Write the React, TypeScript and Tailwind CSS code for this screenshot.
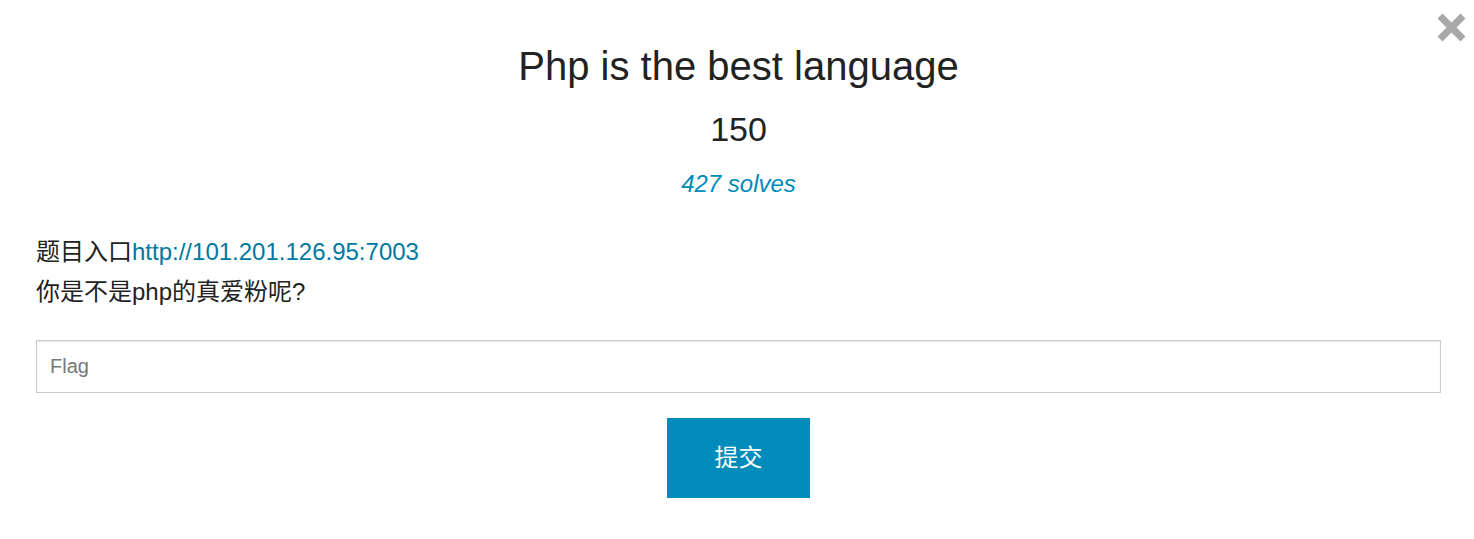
export default function App() {
  return (
    <div className="relative w-full min-h-[539px] bg-white" style={{ fontFamily: '"Liberation Sans", Arial, "Noto Sans CJK SC", sans-serif' }}>
      <button className="absolute right-[8px] top-[13px] w-[29px] h-[29px]" aria-label="close">
        <svg width="29" height="29" viewBox="0 0 29 29">
          <line x1="3" y1="3" x2="26" y2="26" stroke="#a8a8a8" strokeWidth="7" />
          <line x1="26" y1="3" x2="3" y2="26" stroke="#a8a8a8" strokeWidth="7" />
        </svg>
      </button>
      <div className="px-[36px] pr-[33px] pt-[42px]">
        <h1 className="text-center text-[40px] leading-[48px] text-[#222222] font-normal">Php is the best language</h1>
        <div className="mt-[19px] text-center text-[34px] leading-[40px] text-[#222222]">150</div>
        <div className="mt-[19px] text-center text-[24px] leading-[32px] italic text-[#008cba]">427 solves</div>
        <div className="mt-[32px] text-[24px] leading-[40px] text-[#222222]">
          <p>
            题目入口<a href="#" className="text-[#0079a1]">http://101.201.126.95:7003</a>
          </p>
          <p>你是不是php的真爱粉呢?</p>
        </div>
        <input
          type="text"
          placeholder="Flag"
          className="mt-[28px] block w-full h-[53px] border border-[#cccccc] px-[13px] text-[20px] text-[#222] placeholder:text-[#777777] shadow-[inset_0_1px_2px_rgba(0,0,0,0.1)] outline-none"
        />
        <div className="mt-[25px] flex justify-center">
          <button className="w-[143px] h-[80px] bg-[#008cba] text-white text-[24px]">提交</button>
        </div>
      </div>
    </div>
  );
}
